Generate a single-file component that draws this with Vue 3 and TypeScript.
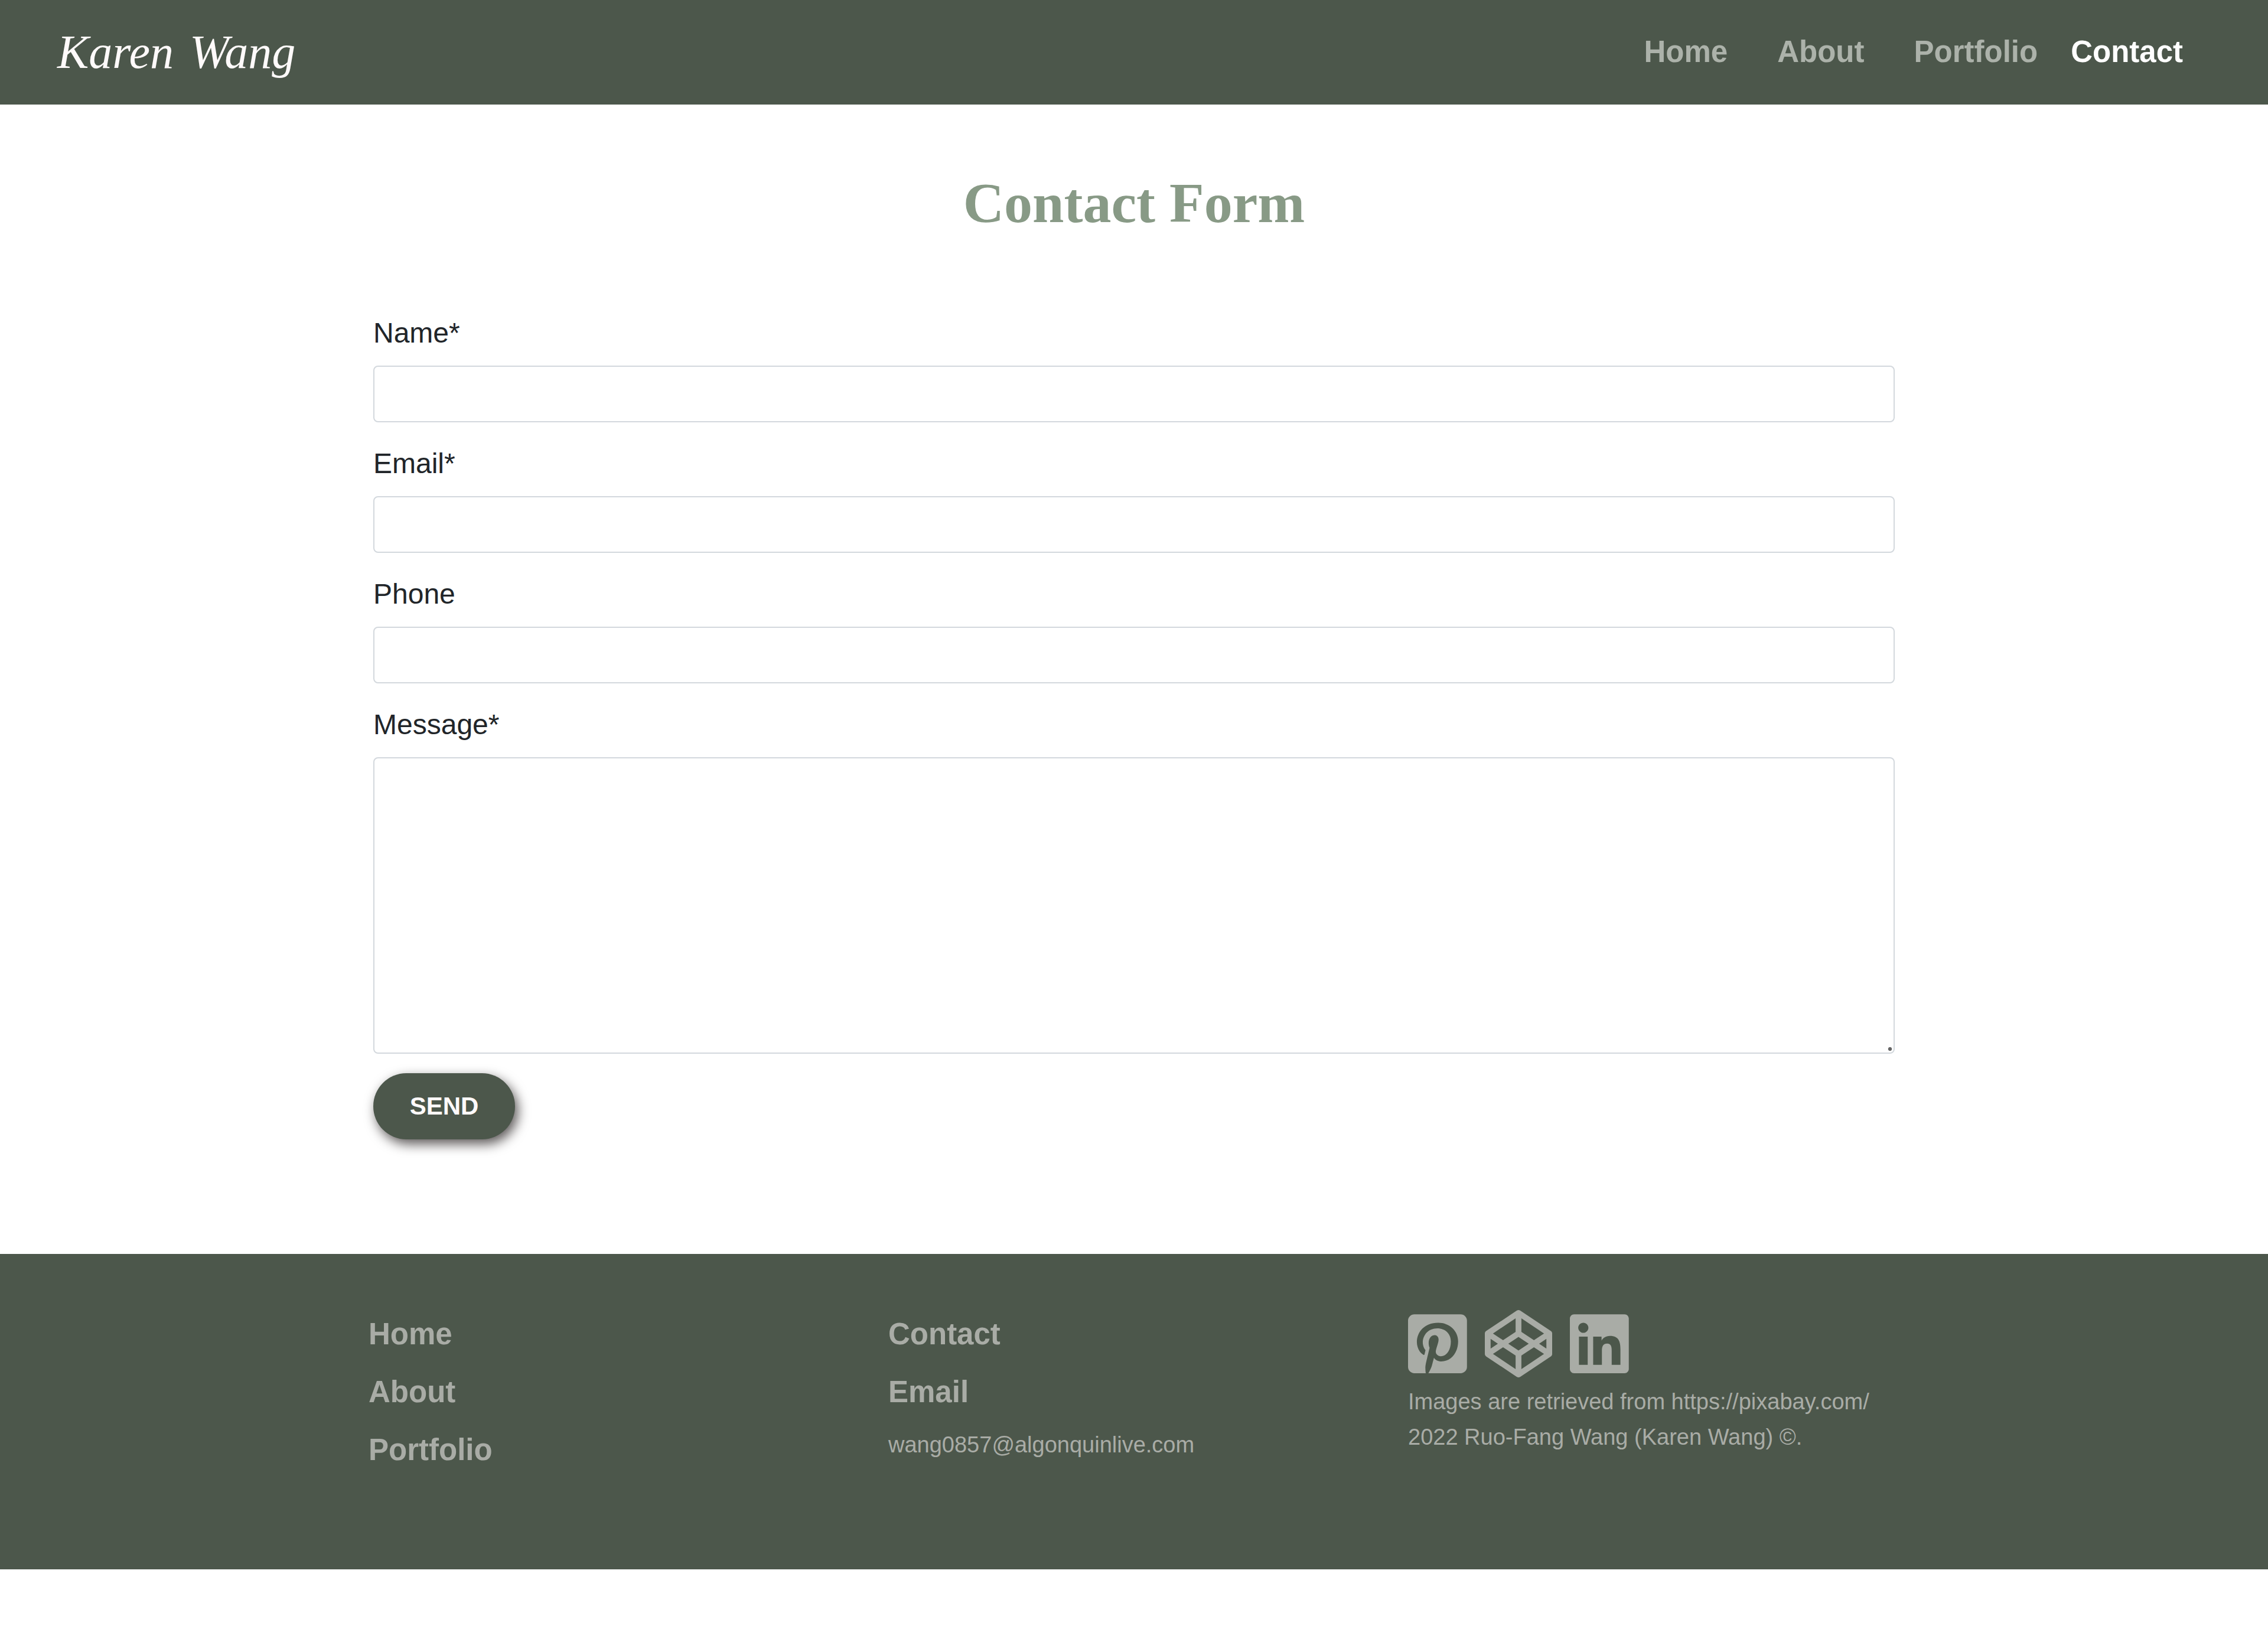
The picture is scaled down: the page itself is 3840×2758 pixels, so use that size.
<script setup lang="ts">
import { reactive } from 'vue'

interface NavLink {
  label: string
  href: string
}

interface SocialLink extends NavLink {
  viewBox: string
  path: string
}

const navLinks: NavLink[] = [
  { label: 'Home', href: '#home' },
  { label: 'About', href: '#about' },
  { label: 'Portfolio', href: '#portfolio' },
  { label: 'Contact', href: '#contact' },
]

const fields = [
  { id: 'name', label: 'Name*', type: 'text', required: true },
  { id: 'email', label: 'Email*', type: 'email', required: true },
  { id: 'phone', label: 'Phone', type: 'tel', required: false },
] as const

const socialLinks: SocialLink[] = [
  {
    label: 'Pinterest',
    href: '#pinterest',
    viewBox: '0 0 448 512',
    path: 'M448 80v352c0 26.5-21.5 48-48 48H154.4c9.8-16.4 22.4-40 27.4-59.3 3-11.5 15.3-58.4 15.3-58.4 8 15.3 31.4 28.2 56.3 28.2 74.1 0 127.4-68.1 127.4-152.7 0-81.1-66.2-141.8-151.4-141.8-106 0-162.2 71.1-162.2 148.6 0 36 19.2 80.8 49.8 95.1 4.7 2.2 7.1 1.2 8.2-3.3.8-3.4 5-20.1 6.8-27.8.6-2.5.3-4.6-1.7-7-10.1-12.3-18.3-34.9-18.3-56 0-54.2 41-106.6 110.9-106.6 60.3 0 102.6 41.1 102.6 99.9 0 66.4-33.5 112.4-77.2 112.4-24.1 0-42.1-19.9-36.4-44.4 6.9-29.2 20.3-60.7 20.3-81.8 0-53-75.5-45.7-75.5 25 0 21.7 7.3 36.5 7.3 36.5-31.4 132.8-36.1 134.5-29.6 192.6l2.2.8H48c-26.5 0-48-21.5-48-48V80c0-26.5 21.5-48 48-48h352c26.5 0 48 21.5 48 48z',
  },
  {
    label: 'CodePen',
    href: '#codepen',
    viewBox: '0 0 512 512',
    path: 'M502.285 159.704l-234-156c-7.987-4.915-16.568-4.94-24.571 0l-234 156C3.714 163.703 0 170.847 0 177.989v155.999c0 7.143 3.714 14.286 9.715 18.286l234 156.022c7.987 4.915 16.568 4.94 24.571 0l234-156.022c6-3.999 9.715-11.143 9.715-18.286V177.989c-.001-7.142-3.715-14.286-9.716-18.285zM278 63.131l172.286 114.858-76.857 51.429L278 165.703V63.131zm-44 0v102.572l-95.429 63.715-76.857-51.429L234 63.131zM44 219.132l55.143 36.857L44 292.847v-73.715zm190 229.715L61.714 333.989l76.857-51.429L234 346.275v102.572zm22-140.858l-77.715-52 77.715-52 77.715 52-77.715 52zm22 140.858V346.275l95.429-63.715 76.857 51.429L278 448.847zm190-156l-55.143-36.857L468 219.132v73.715z',
  },
  {
    label: 'LinkedIn',
    href: '#linkedin',
    viewBox: '0 0 448 512',
    path: 'M416 32H31.9C14.3 32 0 46.5 0 64.3v383.4C0 465.5 14.3 480 31.9 480H416c17.6 0 32-14.5 32-32.3V64.3c0-17.8-14.4-32.3-32-32.3zM135.4 416H69V202.2h66.5V416zm-33.2-243c-21.3 0-38.5-17.3-38.5-38.5S80.9 96 102.2 96c21.2 0 38.5 17.3 38.5 38.5 0 21.3-17.2 38.5-38.5 38.5zm282.1 243h-66.4V312c0-24.8-.5-56.7-34.5-56.7-34.6 0-39.9 27-39.9 54.9V416h-66.4V202.2h63.7v29.2h.9c8.9-16.8 30.6-34.5 62.9-34.5 67.2 0 79.7 44.3 79.7 101.9V416z',
  },
]

const form = reactive({ name: '', email: '', phone: '', message: '' })
</script>

<template>
  <div class="page">
    <header class="site-header">
      <a class="brand" href="#home"><span>Karen</span> <span>Wang</span></a>
      <nav>
        <ul class="nav-list">
          <li v-for="link in navLinks" :key="link.label">
            <a
              class="nav-link"
              :class="{ active: link.label === 'Contact' }"
              :href="link.href"
            >{{ link.label }}</a>
          </li>
        </ul>
      </nav>
    </header>

    <main class="content">
      <h1 class="title">Contact Form</h1>
      <form class="contact-form" @submit.prevent>
        <div v-for="field in fields" :key="field.id" class="field">
          <label :for="field.id">{{ field.label }}</label>
          <input
            :id="field.id"
            v-model="form[field.id]"
            class="control"
            :type="field.type"
            :required="field.required"
          />
        </div>
        <div class="field">
          <label for="message">Message*</label>
          <textarea id="message" v-model="form.message" class="control message" required></textarea>
        </div>
        <button class="send" type="submit">SEND</button>
      </form>
    </main>

    <footer class="site-footer">
      <div class="footer-grid">
        <div class="footer-col">
          <a class="footer-link" href="#home">Home</a>
          <a class="footer-link" href="#about">About</a>
          <a class="footer-link" href="#portfolio">Portfolio</a>
        </div>
        <div class="footer-col">
          <a class="footer-link" href="#contact">Contact</a>
          <a class="footer-link" href="#email">Email</a>
          <p class="note">wang0857@algonquinlive.com</p>
        </div>
        <div class="footer-about">
          <div class="social">
            <a v-for="s in socialLinks" :key="s.label" :href="s.href" :aria-label="s.label">
              <svg :viewBox="s.viewBox" aria-hidden="true"><path :d="s.path" /></svg>
            </a>
          </div>
          <p class="note">Images are retrieved from https://pixabay.com/</p>
          <p class="note">2022 Ruo-Fang Wang (Karen Wang) ©.</p>
        </div>
      </div>
    </footer>
  </div>
</template>

<style>
body {
  margin: 0;
  background: #fff;
}
</style>

<style scoped>
.page {
  font-family: Arial, 'Liberation Sans', sans-serif;
  color: #212529;
}

a {
  color: inherit;
  text-decoration: none;
}

.site-header {
  display: flex;
  flex-wrap: wrap;
  align-items: center;
  justify-content: space-between;
  padding: 49px 144px 50px 97px;
  background: #4c574b;
}

.brand {
  display: flex;
  gap: 27px;
  color: #fffafa;
  font: italic 80px/78px 'Liberation Serif', serif;
}

.nav-list {
  display: flex;
  flex-wrap: wrap;
  gap: 56px;
  margin: 0;
  padding: 0;
  list-style: none;
}

.nav-list li:nth-child(-n + 2) {
  margin-right: 28px;
}

.nav-link,
.footer-link {
  display: block;
  font-size: 51px;
  font-weight: 700;
  line-height: 78px;
}

.nav-link {
  color: #acb2aa;
}

.nav-link.active {
  color: #fff;
}

.content {
  max-width: 2576px;
  margin: 0 auto;
  padding: 107px 24px 194px;
}

.title {
  margin: 0 0 123px;
  color: #889a86;
  font: 700 96px/120px 'Liberation Serif', serif;
  text-align: center;
}

.contact-form {
  display: flex;
  flex-direction: column;
  gap: 33px;
}

.field {
  display: flex;
  flex-direction: column;
  gap: 18px;
}

.field label {
  font-size: 48px;
  line-height: 74px;
}

.control {
  box-sizing: border-box;
  width: 100%;
  height: 96px;
  margin: 0;
  padding: 12px 28px;
  border: 2px solid #d3d8dd;
  border-radius: 8px;
  background: #fff;
  color: inherit;
  font: 48px/72px 'Liberation Sans', sans-serif;
}

.message {
  height: 502px;
  resize: vertical;
}

.message::-webkit-resizer {
  background: radial-gradient(circle at 9px 9px, #666 3px, transparent 3px);
}

.send {
  align-self: flex-start;
  width: 240px;
  height: 112px;
  padding: 0;
  border: 0;
  border-radius: 56px;
  background: #4c574b;
  box-shadow: 5px 8px 20px #5c5858;
  color: #fffafa;
  font: 700 42px/64px 'Liberation Sans', sans-serif;
}

.site-footer {
  padding: 97px 24px 163px;
  background: #4c574b;
  color: #a9aca6;
}

.footer-grid {
  display: grid;
  grid-template-columns: repeat(3, 1fr);
  max-width: 2640px;
  margin: 0 auto;
}

.footer-grid > div {
  padding-left: 24px;
}

.footer-col {
  display: flex;
  flex-direction: column;
  align-items: flex-start;
  gap: 20px;
}

.note {
  margin: 0;
  font-size: 38px;
  line-height: 60px;
}

.social {
  display: flex;
  gap: 30px;
  margin: -2px 0 11px;
}

.social svg {
  display: block;
  height: 114px;
  fill: currentColor;
}
</style>
